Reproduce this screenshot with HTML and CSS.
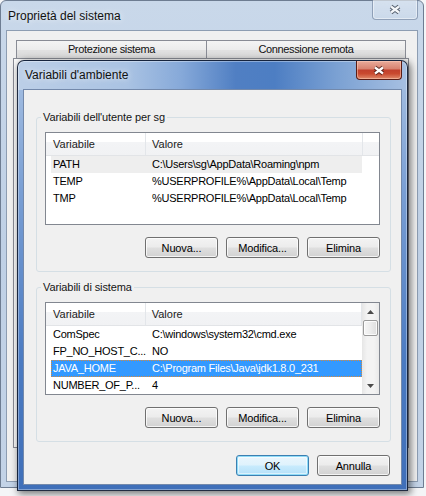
FILE: index.html
```html
<!DOCTYPE html>
<html lang="it">
<head>
<meta charset="utf-8">
<title>Variabili d'ambiente</title>
<link rel="stylesheet" href="styles.css">
</head>
<body>
<div class="desktop">
  <section class="window outer">
    <header class="titlebar outer-title">
      <span class="title-text">Proprietà del sistema</span>
      <span class="close close-inactive" aria-label="Chiudi">
        <svg width="14" height="11" viewBox="0 0 14 11"><path d="M3 2.5L11 8.5M11 2.5L3 8.5" stroke="#55606e" stroke-width="4.2" fill="none"/><path d="M3 2.5L11 8.5M11 2.5L3 8.5" stroke="#f4f6f9" stroke-width="2.2" fill="none"/></svg>
      </span>
    </header>
    <div class="client outer-client">
      <div class="tabs">
        <div class="tab tab-wide">Protezione sistema</div>
        <div class="tab tab-wider">Connessione remota</div>
      </div>
      <div class="tab-panel"></div>
    </div>
  </section>

  <section class="window inner">
    <header class="titlebar inner-title">
      <span class="title-text">Variabili d'ambiente</span>
      <span class="close close-active" aria-label="Chiudi">
        <svg width="14" height="11" viewBox="0 0 14 11"><path d="M3 2.5L11 8.5M11 2.5L3 8.5" stroke="#3a1410" stroke-width="4.2" fill="none" opacity=".75"/><path d="M3 2.5L11 8.5M11 2.5L3 8.5" stroke="#ffffff" stroke-width="2.2" fill="none"/></svg>
      </span>
    </header>
    <div class="client inner-client">
      <fieldset class="group">
        <legend>Variabili dell'utente per sg</legend>
        <div class="listview">
          <div class="lv-main">
            <div class="lv-header">
              <div class="hcol h1">Variabile</div>
              <div class="hcol h2">Valore</div>
              <div class="hcol h3"></div>
            </div>
            <div class="lv-rows">
              <div class="row row-hot"><span class="c1">PATH</span><span class="c2">C:\Users\sg\AppData\Roaming\npm</span></div>
              <div class="row"><span class="c1">TEMP</span><span class="c2">%USERPROFILE%\AppData\Local\Temp</span></div>
              <div class="row"><span class="c1">TMP</span><span class="c2">%USERPROFILE%\AppData\Local\Temp</span></div>
            </div>
          </div>
        </div>
        <div class="btn-row">
          <button class="btn">Nuova...</button>
          <button class="btn">Modifica...</button>
          <button class="btn">Elimina</button>
        </div>
      </fieldset>

      <fieldset class="group group-2">
        <legend>Variabili di sistema</legend>
        <div class="listview">
          <div class="lv-main">
            <div class="lv-header">
              <div class="hcol h1">Variabile</div>
              <div class="hcol h2">Valore</div>
            </div>
            <div class="lv-rows">
              <div class="row"><span class="c1">ComSpec</span><span class="c2">C:\windows\system32\cmd.exe</span></div>
              <div class="row"><span class="c1">FP_NO_HOST_C...</span><span class="c2">NO</span></div>
              <div class="row row-sel"><span class="c1">JAVA_HOME</span><span class="c2">C:\Program Files\Java\jdk1.8.0_231</span></div>
              <div class="row row-last"><span class="c1">NUMBER_OF_P...</span><span class="c2">4</span></div>
            </div>
          </div>
          <div class="scrollbar">
            <div class="sb-btn"><svg width="7" height="4" viewBox="0 0 7 4"><path d="M0 4L3.5 0L7 4Z" fill="#4a4a4a"/></svg></div>
            <div class="sb-track"><div class="sb-thumb"></div></div>
            <div class="sb-btn"><svg width="7" height="4" viewBox="0 0 7 4"><path d="M0 0L3.5 4L7 0Z" fill="#4a4a4a"/></svg></div>
          </div>
        </div>
        <div class="btn-row">
          <button class="btn">Nuova...</button>
          <button class="btn">Modifica...</button>
          <button class="btn">Elimina</button>
        </div>
      </fieldset>

      <div class="dialog-buttons">
        <button class="btn btn-default">OK</button>
        <button class="btn">Annulla</button>
      </div>
    </div>
  </section>
</div>
</body>
</html>
```

FILE: styles.css
```css
* { box-sizing: border-box; }

html, body {
  margin: 0;
  padding: 0;
}

body {
  background: #f4f5f7;
  font-family: "Liberation Sans", Arial, sans-serif;
  font-size: 11px;
  color: #000;
}

.desktop {
  position: relative;
  width: 426px;
  height: 496px;
  overflow: hidden;
}

.window {
  position: absolute;
  display: flex;
  flex-direction: column;
}

/* ---------- outer (inactive) window ---------- */
.outer {
  left: 0;
  top: 0;
  width: 424px;
  height: 488px;
  border: 1px solid #6e7d92;
  border-radius: 6px 6px 0 0;
  padding: 0 5px 5px 5px;
  background: linear-gradient(180deg, #c9d8ea 0%, #bfd0e5 50%, #c3d3e7 100%);
}

.titlebar {
  display: flex;
  align-items: center;
  flex: none;
}

.title-text {
  font-size: 12px;
  line-height: 14px;
  color: #111;
  text-shadow: 0 0 6px rgba(255, 255, 255, 0.9);
}

.outer-title {
  height: 29px;
  padding-left: 2px;
}

.close {
  margin-left: auto;
  align-self: flex-start;
  width: 46px;
  display: flex;
  align-items: center;
  justify-content: center;
  border-radius: 0 0 4px 4px;
}

.close-inactive {
  height: 20px;
  margin-top: -1px;
  border: 1px solid rgba(90, 110, 140, 0.55);
  border-top: none;
  box-shadow: inset 0 0 0 1px rgba(255, 255, 255, 0.45);
  background: linear-gradient(180deg, rgba(255,255,255,0.25), rgba(255,255,255,0.05));
}

.outer-client {
  flex: 1;
  background: #f0f0f0;
  border: 1px solid #8d9db2;
  display: flex;
  flex-direction: column;
}

.tabs {
  display: flex;
  margin: 9px 0 0 9px;
}

.tab {
  height: 18px;
  line-height: 17px;
  text-align: center;
  border: 1px solid #898c95;
  border-bottom: none;
  background: linear-gradient(180deg, #f4f4f4 0%, #ececec 50%, #e2e2e2 51%, #d9d9d9 100%);
  color: #111;
  letter-spacing: -0.35px;
}

.tab-wide { width: 191px; }
.tab-wider { width: 200px; margin-left: -1px; }

.tab-panel {
  margin-left: 6px;
  width: 396px;
  height: 390px;
  background: #fbfbfb;
  border: 1px solid #898c95;
}

/* ---------- inner (active) dialog ---------- */
.inner {
  left: 17px;
  top: 60px;
  width: 391px;
  height: 431px;
  border: 1px solid rgba(18, 28, 48, 0.9);
  border-radius: 7px 7px 0 0;
  padding: 0 5px 5px 5px;
  background:
    linear-gradient(90deg, #bccfe7 0%, #aac3e3 28%, #86a9d9 42%, #507fc3 56%, #4d7ec3 66%, #7ba1d3 82%, #a7c0e2 100%) top / 100% 29px no-repeat,
    linear-gradient(180deg, #a9c2e3 0%, #7a9fd4 30%, #4b7bc2 70%, #3f6fb9 100%);
  box-shadow: 2px 2px 7px 1px rgba(0, 0, 0, 0.5), inset 0 0 0 1px rgba(255, 255, 255, 0.35);
}

.inner-title {
  height: 28px;
  padding-left: 2px;
}

.close-active {
  height: 19px;
  border: 1px solid #5a1d15;
  border-top: none;
  background: linear-gradient(180deg, #e9ab9b 0%, #d98471 42%, #c2412d 52%, #c9492f 70%, #e08a6a 100%);
  box-shadow: inset 0 0 0 1px rgba(255, 210, 190, 0.5);
}

.inner-client {
  flex: 1;
  background: #f0f0f0;
  border: 1px solid #7389ab;
  display: flex;
  flex-direction: column;
}

.group {
  margin: 21px 10px 0 12px;
  padding: 8px 10px 13px 8px;
  border: 1px solid #d5dfe5;
  border-radius: 3px;
  min-width: 0;
}

.group-2 { margin-top: 9px; }

.group legend {
  padding: 0 2px;
  margin-left: -4px;
  line-height: 13px;
  color: #151515;
  letter-spacing: -0.1px;
}

.listview {
  height: 93px;
  border: 1px solid #828790;
  background: #fff;
  display: flex;
  overflow: hidden;
}

.lv-main {
  flex: 1;
  min-width: 0;
}

.lv-header {
  display: flex;
  height: 23px;
  border-bottom: 1px solid #e2e4e7;
  background: linear-gradient(180deg, #ffffff 0%, #ffffff 40%, #f3f4f6 41%, #f1f2f4 100%);
}

.hcol {
  line-height: 22px;
  color: #1c1c1c;
}

.h1 {
  width: 100px;
  padding-left: 7px;
  border-right: 1px solid #e3e6ea;
}

.h2 {
  width: 217px;
  padding-left: 6px;
  border-right: 1px solid #e3e6ea;
}

.h3 { flex: 1; }

.row {
  display: flex;
  width: 311px;
  height: 17px;
  margin-left: 5px;
  line-height: 17px;
  white-space: nowrap;
  letter-spacing: -0.25px;
}

.row-last {
  height: 16px;
  line-height: 16px;
}

.row .c1 {
  width: 95px;
  padding-left: 2px;
}

.row .c2 {
  width: 216px;
  padding-left: 6px;
}

.row-hot { background: #eeeeee; }

.row-sel {
  background: #3399ff;
  color: #fff;
  outline: 1px dotted #d7893c;
  outline-offset: -1px;
}

.scrollbar {
  width: 17px;
  flex: none;
  display: flex;
  flex-direction: column;
  background: linear-gradient(90deg, #e6e6e6 0%, #f3f3f3 30%, #f3f3f3 70%, #e9e9e9 100%);
}

.sb-btn {
  height: 17px;
  display: flex;
  align-items: center;
  justify-content: center;
}

.sb-track {
  flex: 1;
}

.sb-thumb {
  margin: 0 1px;
  height: 16px;
  border: 1px solid #9a9a9a;
  border-radius: 2px;
  background: linear-gradient(90deg, #f6f6f6 0%, #ececec 50%, #dedede 100%);
  box-shadow: inset 0 0 0 1px rgba(255, 255, 255, 0.8);
}

.btn-row {
  display: flex;
  justify-content: flex-end;
  gap: 8px;
  margin-top: 12px;
}

.btn {
  width: 73px;
  height: 21px;
  padding: 0;
  border: 1px solid #707070;
  border-radius: 3px;
  background: linear-gradient(180deg, #f3f3f3 0%, #ececec 48%, #dfdfdf 52%, #d2d2d2 100%);
  box-shadow: inset 0 0 0 1px rgba(255, 255, 255, 0.75);
  font-family: "Liberation Sans", Arial, sans-serif;
  font-size: 11px;
  letter-spacing: -0.15px;
  color: #000;
}

.btn-default {
  border-color: #3c7fb1;
  background: linear-gradient(180deg, #eaf6fd 0%, #dff2fc 48%, #c8ebfd 52%, #b4e0f8 100%);
  box-shadow: inset 0 0 0 1px #8fdcf8, inset 0 0 0 2px rgba(255, 255, 255, 0.5);
}

.dialog-buttons {
  display: flex;
  justify-content: flex-end;
  gap: 8px;
  margin: 13px 11px 0 0;
}
```
